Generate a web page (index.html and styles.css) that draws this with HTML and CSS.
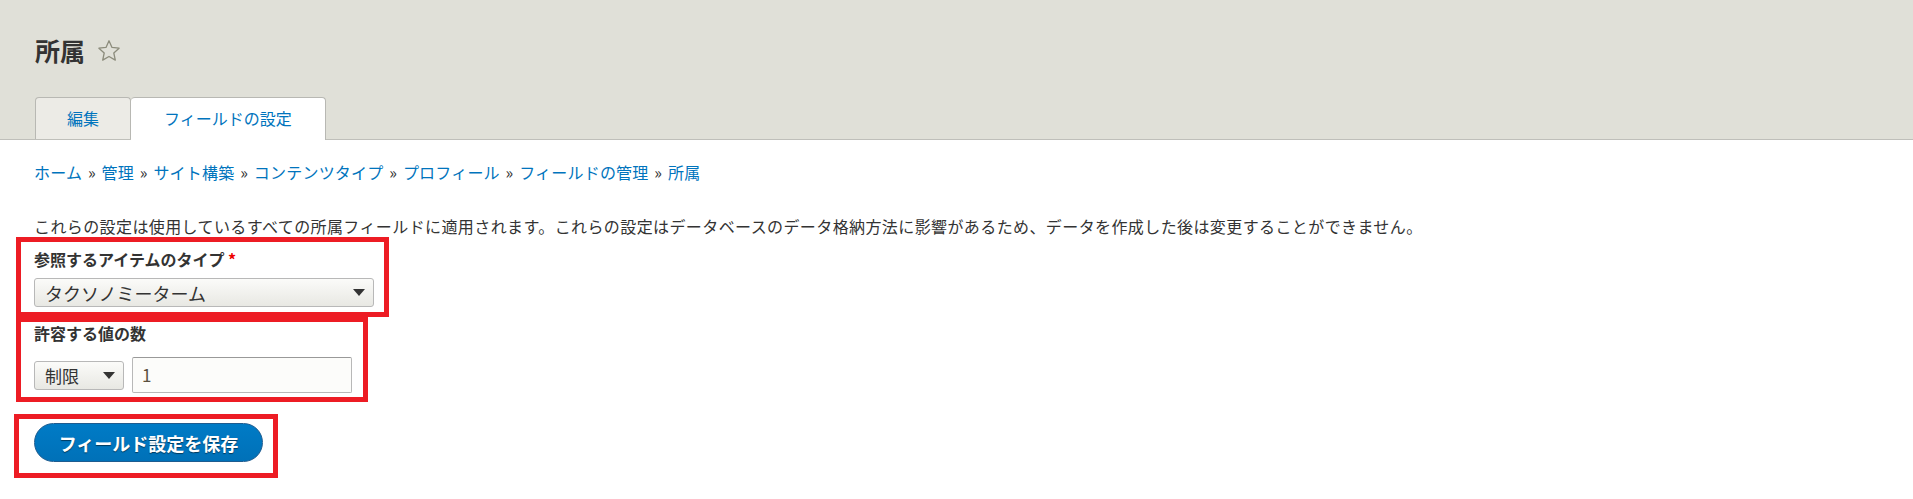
FILE: index.html
```html
<!DOCTYPE html>
<html lang="ja">

<head>
    <meta charset="UTF-8" />
    <title>所属 | フィールドの設定</title>
    <link rel="stylesheet" href="styles.css">
</head>

<body>
    <header class="page-header">
        <h1 class="page-title">所属
            <svg class="star" width="24" height="24" viewBox="0 0 24 24">
                <path d="M12 1.8l3 6.6 7.1.8-5.3 4.8 1.5 7.1L12 17.5l-6.3 3.6 1.5-7.1L1.9 9.2 9 8.4z" fill="none" stroke="#8c8c7c" stroke-width="1.3" stroke-linejoin="round" />
            </svg>
        </h1>
        <ul class="tabs">
            <li><a class="tab" href="#">編集</a></li>
            <li><a class="tab active" href="#">フィールドの設定</a></li>
        </ul>
    </header>

    <div class="content">

        <!-- パンくず -->
        <nav class="breadcrumb">
            <a href="#">ホーム</a> » <a href="#">管理</a> » <a href="#">サイト構築</a> » <a href="#">コンテンツタイプ</a> » <a href="#">プロフィール</a> » <a href="#">フィールドの管理</a> » <a href="#">所属</a>
        </nav>

        <p class="description">これらの設定は使用しているすべての所属フィールドに適用されます。これらの設定はデータベースのデータ格納方法に影響があるため、データを作成した後は変更することができません。</p>

        <!-- 参照タイプ -->
        <div class="mark mark-type">
            <div class="label">参照するアイテムのタイプ <span class="required">*</span></div>
            <div class="select select-wide">
                <span>タクソノミーターム</span>
                <svg width="12" height="7" viewBox="0 0 12 7"><path d="M0 0h12L6 7z" fill="#333" /></svg>
            </div>
        </div>

        <!-- 値の数 -->
        <div class="mark mark-count">
            <div class="label">許容する値の数</div>
            <div class="row">
                <div class="select select-small">
                    <span>制限</span>
                    <svg width="12" height="7" viewBox="0 0 12 7"><path d="M0 0h12L6 7z" fill="#333" /></svg>
                </div>
                <div class="input">1</div>
            </div>
        </div>

        <div class="mark mark-submit">
            <button class="button-primary">フィールド設定を保存</button>
        </div>

    </div>
</body>

</html>
```
FILE: styles.css
```css
body {
    font-family: "Noto Sans CJK JP", "Noto Sans", sans-serif;
    color: #333;
    background-color: white;
    margin: 0;
    padding: 0;
}

a {
    color: #0074bd;
    text-decoration: none;
}

.page-header {
    background-color: #e0e0d8;
    border-bottom: 1px solid #bfbfba;
    padding: 35px 0 0 35px;
}

.page-title {
    margin: 0;
    font-size: 25px;
    line-height: 30px;
    font-weight: bold;
    color: #333;
    display: flex;
    align-items: center;
    gap: 12px;
}

.star {
    margin-top: 1px;
}

.tabs {
    list-style: none;
    margin: 32px 0 0;
    padding: 0;
    display: flex;
}

.tab {
    display: block;
    height: 41px;
    line-height: 41px;
    padding: 0 31px;
    font-size: 16px;
    background-color: #ecebe6;
    border: 1px solid #b8b8b3;
    border-bottom: none;
    border-radius: 4px 4px 0 0;
}

.tab.active {
    background-color: white;
    height: 42px;
    margin-bottom: -1px;
    padding: 0 33px;
    border-left: none;
}

.content {
    padding-top: 22px;
}

.breadcrumb {
    margin-left: 34px;
    font-size: 16px;
    line-height: 20px;
    letter-spacing: 0.2px;
    word-spacing: 2px;
    color: #333;
}

.description {
    margin: 34px 0 1px 34px;
    font-size: 16px;
    line-height: 20px;
    letter-spacing: 0.4px;
}

.mark {
    border: 5px solid #ed1c24;
    box-sizing: border-box;
}

.mark-type {
    margin-left: 16px;
    width: 373px;
    height: 80px;
    padding: 7px 0 0 13px;
}

.mark-count {
    margin-left: 16px;
    width: 352px;
    height: 85px;
    padding: 1px 0 0 13px;
}

.mark-submit {
    margin: 12px 0 0 14px;
    width: 264px;
    height: 64px;
    padding: 4px 0 0 15px;
}

.label {
    font-size: 16px;
    line-height: 20px;
    font-weight: bold;
    margin-bottom: 9px;
}

.mark-count .label {
    margin-bottom: 14px;
}

.required {
    color: #e00;
}

.select {
    box-sizing: border-box;
    height: 29px;
    display: flex;
    align-items: center;
    justify-content: space-between;
    padding: 0 8px 0 10px;
    font-size: 18px;
    border: 1px solid #b8b8b8;
    border-radius: 3px;
    background: linear-gradient(#fbfbf9, #e8e8e3);
}

.select-wide {
    width: 340px;
}

.select-small {
    width: 90px;
    font-size: 17px;
}

.row {
    display: flex;
    align-items: center;
    gap: 8px;
}

.input {
    box-sizing: border-box;
    width: 220px;
    height: 36px;
    line-height: 34px;
    padding-left: 9px;
    font-size: 17px;
    color: #5a5040;
    background-color: #fcfcfa;
    border: 1px solid #b8b8b8;
    border-top-color: #999;
    border-radius: 2px;
}

.button-primary {
    width: 229px;
    height: 39px;
    border-radius: 20px;
    border: 1px solid #1e5c90;
    background: linear-gradient(#007bc6, #0071b8);
    color: white;
    font-family: inherit;
    font-size: 18px;
    font-weight: bold;
    text-shadow: 0 1px 1px rgba(0, 0, 0, 0.5);
    cursor: pointer;
}
```
